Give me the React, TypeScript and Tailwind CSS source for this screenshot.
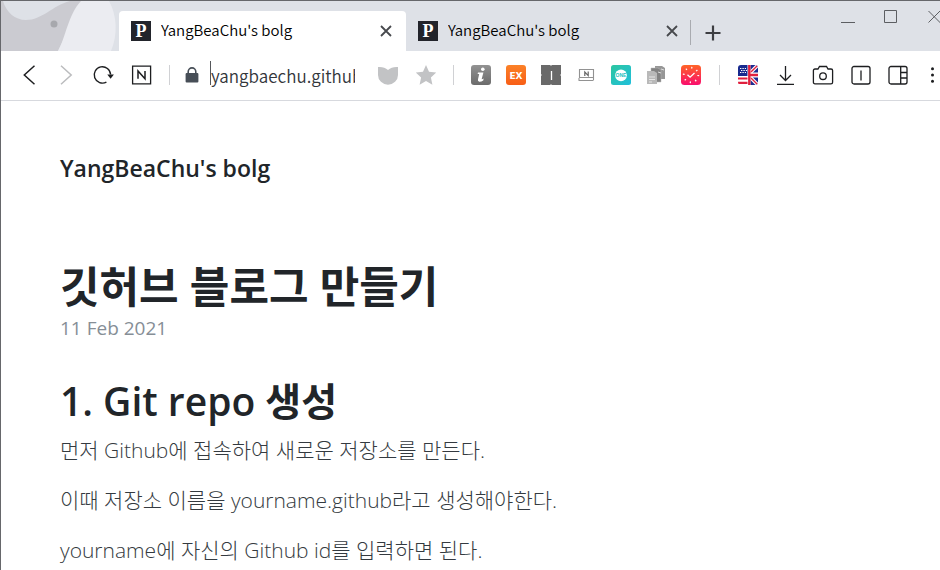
import type { ReactNode } from "react";

const uiFont = "font-['Noto_Sans_CJK_KR','Noto_Sans',sans-serif]";
const pageFont = "font-['Open_Sans','Noto_Sans_CJK_KR',sans-serif]";

function Favicon() {
  return (
    <span className="flex size-5 shrink-0 items-center justify-center bg-[#22242b] font-['Liberation_Serif',serif] text-lg leading-5 font-bold text-white">
      P
    </span>
  );
}

function Cross() {
  return (
    <svg viewBox="0 0 12 12" className="size-3" fill="none" stroke="#47494d" strokeWidth="1.8">
      <path d="M1 1l10 10M11 1L1 11" />
    </svg>
  );
}

function Tab({ active = false }: { active?: boolean }) {
  return (
    <div
      className={
        active
          ? "flex h-10 w-[287px] shrink-0 items-center rounded-t bg-white pl-3 pr-3.5"
          : "flex h-10 w-[284px] shrink-0 items-center pl-3 pr-3"
      }
    >
      <Favicon />
      <span className="ml-2.5 flex-1 truncate pb-0.5 text-[15px] leading-6 font-[350] text-black">YangBeaChu's bolg</span>
      <button aria-label="Close tab">
        <Cross />
      </button>
    </div>
  );
}

function Tool({ label, wide = false, children }: { label: string; wide?: boolean; children: ReactNode }) {
  return (
    <button
      aria-label={label}
      className={
        wide ? "flex h-5 w-[22px] shrink-0 items-center justify-center" : "flex size-5 shrink-0 items-center justify-center"
      }
    >
      {children}
    </button>
  );
}

function Divider() {
  return <span className="h-5 w-px shrink-0 bg-[#d0d1d4]" />;
}

function TabStrip() {
  return (
    <header className="flex h-[50px] overflow-hidden bg-[#dee1e7]">
      <svg viewBox="0 0 118 50" className="h-[50px] w-[118px] shrink-0">
        <path d="M0 0h118v50H0z" fill="#dee1e7" />
        <path d="M0 0h81L57 50H0z" fill="#cbcbd1" />
        <path d="M2 0C5 11 14 19 25 19C41 19 51 5 69 0z" fill="#dee1e7" />
        <path d="M80 0C67 14 65 36 57 50H110C117 34 116 14 108 0z" fill="#ebecf1" />
        <circle cx="53" cy="23" r="3.5" fill="#a7a8ad" />
      </svg>
      <div className="flex flex-1 items-end">
        <Tab active />
        <Tab />
        <span className="mb-1.5 h-[25px] w-px bg-[#a9abb0]" />
        <button aria-label="New tab" className="mb-2.5 ml-3.5">
          <svg viewBox="0 0 16 16" className="size-4" stroke="#3d3e42" strokeWidth="2.2">
            <path d="M8 0.5v15M0.5 8h15" />
          </svg>
        </button>
      </div>
      <div className="flex items-start gap-[29px] pt-2">
        <button aria-label="Minimize">
          <svg viewBox="0 0 14 14" className="size-3.5" stroke="#5c5e62">
            <path d="M0 13.5h14" />
          </svg>
        </button>
        <button aria-label="Maximize">
          <svg viewBox="0 0 14 14" className="size-3.5" fill="none" stroke="#5c5e62">
            <path d="M0.5 1.5h12v12h-12z" />
          </svg>
        </button>
        <button aria-label="Close window" className="w-[13px]">
          <svg viewBox="0 0 13 14" className="h-3.5 w-[13px]" stroke="#5c5e62">
            <path d="M1.5 2l12 12M13 2L1.5 13.5" />
          </svg>
        </button>
      </div>
    </header>
  );
}

function Extensions() {
  return (
    <div className="flex gap-[15px]">
      <Tool label="Info">
        <svg viewBox="0 0 20 20" className="size-5">
          <defs>
            <linearGradient id="info" x1="0" y1="0" x2="0" y2="1">
              <stop offset="0" stopColor="#929292" />
              <stop offset="1" stopColor="#6b6b6b" />
            </linearGradient>
          </defs>
          <rect width="20" height="20" rx="3" fill="url(#info)" />
          <circle cx="11.8" cy="4.3" r="1.8" fill="#fff" />
          <path d="M7 7.4h5.4L10.7 14q0 .7 2-.4l-.5 1.8q-2 1.5-4 1.3-1.8-.4-1.2-2.4L8.2 9H6.6z" fill="#fff" />
        </svg>
      </Tool>
      <Tool label="EX">
        <svg viewBox="0 0 20 20" className="size-5">
          <defs>
            <linearGradient id="ex" x1="0" y1="0" x2="0" y2="1">
              <stop offset="0" stopColor="#fb8128" />
              <stop offset="1" stopColor="#f85e16" />
            </linearGradient>
          </defs>
          <rect width="20" height="20" rx="3" fill="url(#ex)" />
          <text x="10" y="13.5" textAnchor="middle" fontFamily="DejaVu Sans" fontWeight="700" fontSize="9" fill="#fff">
            EX
          </text>
        </svg>
      </Tool>
      <Tool label="Text cursor">
        <svg viewBox="0 0 20 20" className="size-5">
          <path d="M0 0h20v20H0z" fill="#696969" />
          <path d="M10 0v1M10 19v1M0 10h1M19 10h1" stroke="#ddd" />
          <path d="M10.5 6v9" stroke="#fff" strokeWidth="1.3" />
        </svg>
      </Tool>
      <Tool label="Note">
        <svg viewBox="0 0 20 20" className="size-5" fill="none" stroke="#929292">
          <path d="M3.5 4.5h14v8h-14zM2.5 15.5h15M3 13v2M17.5 13v2" strokeWidth="1.1" />
          <path d="M8.8 11V7l3.4 3.6V6.6" stroke="#666" strokeWidth="1.2" />
        </svg>
      </Tool>
      <Tool label="ONE">
        <svg viewBox="0 0 20 20" className="size-5">
          <defs>
            <linearGradient id="one" x1="0" y1="0" x2="1" y2="1">
              <stop offset="0" stopColor="#2cc6a0" />
              <stop offset="1" stopColor="#20bfdc" />
            </linearGradient>
          </defs>
          <rect width="20" height="20" rx="2.5" fill="url(#one)" />
          <circle cx="10" cy="10.3" r="5.9" fill="#fff" />
          <text x="10" y="12.3" textAnchor="middle" fontFamily="Liberation Sans" fontWeight="700" fontSize="5" fill="#25c2be">
            ONE
          </text>
        </svg>
      </Tool>
      <Tool label="Copies">
        <svg viewBox="0 0 20 20" className="size-5">
          <path d="M9 1h7l3 2v11H9z" fill="#979797" />
          <path d="M5 3h7l3 2v12H5z" fill="#838383" stroke="#bbb" strokeWidth=".5" />
          <path d="M1 6h7l3 2v11H1z" fill="#b9b9b9" />
          <path d="M3 12h6M3 14.5h6M3 17h3" stroke="#e6e6e6" />
          <path d="M12 7l3 1M15 4l3 1" stroke="#ddd" />
        </svg>
      </Tool>
      <Tool label="Clock">
        <svg viewBox="0 0 20 20" className="size-5">
          <defs>
            <linearGradient id="clock" x1="0" y1="0" x2="0" y2="1">
              <stop offset="0" stopColor="#ff6427" />
              <stop offset="1" stopColor="#f90d6d" />
            </linearGradient>
          </defs>
          <rect width="20" height="20" rx="3.5" fill="url(#clock)" />
          <circle cx="10" cy="10" r="7.3" fill="none" stroke="#fff" strokeWidth="1.8" strokeDasharray="1.2 4.53" />
          <path d="M6.5 9.7l2.6 2.5L13.5 8" fill="none" stroke="#fff" strokeWidth="1.3" />
        </svg>
      </Tool>
    </div>
  );
}

function BrowserTools() {
  return (
    <div className="flex gap-[17px] text-[#1d1e20]">
      <Tool label="Translate">
        <svg viewBox="0 0 20 20" className="size-5">
          <defs>
            <clipPath id="flag">
              <rect width="20" height="20" rx="3" />
            </clipPath>
          </defs>
          <g clipPath="url(#flag)">
            <path d="M0 0h20v20H0z" fill="#fff" />
            <path d="M0 13.5h10M0 17.8h10" stroke="#e0203e" strokeWidth="2.2" />
            <path d="M0 0h10v11H0z" fill="#182a8e" />
            <path d="M2 3.5h6M3 5.5h6M2 7.5h6" stroke="#fff" strokeDasharray="1.4 1" />
            <path d="M11 0h9v20h-9z" fill="#1c2b91" />
            <path d="M20 0L11 9M20 20l-9-9" stroke="#fff" strokeWidth="3.6" />
            <path d="M20 0l-8 8M20 20l-8-8" stroke="#e0203e" strokeWidth="1.4" />
            <path d="M11 10h9" stroke="#fff" strokeWidth="5" />
            <path d="M11 0v20" stroke="#fff" strokeWidth="3" />
            <path d="M11 10h9M11.3 0v20" stroke="#e0203e" strokeWidth="2.4" />
          </g>
        </svg>
      </Tool>
      <Tool label="Downloads">
        <svg viewBox="0 0 20 20" className="size-5" fill="none" stroke="currentColor" strokeWidth="1.3">
          <path d="M10.5 1v14.5M5 10l5.5 5.5L16 10M2 19.3h17" />
        </svg>
      </Tool>
      <Tool label="Capture" wide>
        <svg viewBox="0 0 22 20" className="h-5 w-[22px]" fill="none" stroke="currentColor" strokeWidth="1.3">
          <path d="M3 4h3l1.5-2.5h7L16 4h3q1.6 0 1.6 1.6v11.6q0 1.6-1.6 1.6H3q-1.6 0-1.6-1.6V5.6Q1.4 4 3 4z" />
          <circle cx="11" cy="11.2" r="3.3" />
        </svg>
      </Tool>
      <Tool label="Memo">
        <svg viewBox="0 0 20 20" className="size-5" fill="none" stroke="currentColor" strokeWidth="1.3">
          <rect x="1" y="1.5" width="18" height="17.5" rx="2" />
          <path d="M10 5.5v10" />
        </svg>
      </Tool>
      <Tool label="Side panel">
        <svg viewBox="0 0 20 20" className="size-5" fill="none" stroke="currentColor" strokeWidth="1.3">
          <rect x="1" y="1.5" width="18" height="17.5" rx="2" />
          <path d="M12.7 1.5V19M12.7 7.5H19M12.7 13H19" />
        </svg>
      </Tool>
      <button aria-label="Menu" className="w-[15px] shrink-0">
        <svg viewBox="0 0 15 20" className="h-5 w-[15px]" fill="currentColor">
          <circle cx="7.5" cy="3.8" r="1.5" />
          <circle cx="7.5" cy="10" r="1.5" />
          <circle cx="7.5" cy="16.2" r="1.5" />
        </svg>
      </button>
    </div>
  );
}

function Toolbar() {
  return (
    <nav className="flex h-[50px] items-center overflow-hidden border-b border-[#d7d9de] bg-white pb-px">
      <div className="flex gap-[17px] pl-[18px]">
        <Tool label="Back">
          <svg viewBox="0 0 20 20" className="size-5" fill="none" stroke="#1d1e20" strokeWidth="1.5">
            <path d="M15.5 0.8L5.3 10l10.2 9.2" />
          </svg>
        </Tool>
        <Tool label="Forward">
          <svg viewBox="0 0 20 20" className="size-5" fill="none" stroke="#bbbcbe" strokeWidth="1.5">
            <path d="M5 0.8L15.2 10 5 19.2" />
          </svg>
        </Tool>
        <Tool label="Reload">
          <svg viewBox="0 0 20 20" className="size-5 overflow-visible" fill="none" stroke="#1d1e20" strokeWidth="1.4">
            <path d="M13.4 17.1A8.2 8.2 0 1 1 17.6 9.5" />
            <path d="M14.3 9.4h6.6L17.6 13.8z" fill="#1d1e20" stroke="none" />
          </svg>
        </Tool>
        <Tool label="Naver" wide>
          <svg viewBox="0 0 22 20" className="h-5 w-[22px]" fill="none" stroke="#1d1e20" strokeWidth="1.3">
            <path d="M2.6 1.1h18v17.8h-18z" />
            <path d="M8 13.7V6l7 7.7V6" strokeWidth="1.5" />
          </svg>
        </Tool>
      </div>
      <form className="ml-[17px] flex flex-1 items-center" onSubmit={(event) => event.preventDefault()}>
        <Divider />
        <svg viewBox="0 0 14 16" className="ml-[15px] h-4 w-3.5 shrink-0">
          <path d="M3.2 7V4.7a3.8 3.8 0 0 1 7.6 0V7" fill="none" stroke="#474e57" strokeWidth="1.6" />
          <rect x="0.6" y="6" width="12.8" height="9.4" rx="1" fill="#474e57" />
        </svg>
        <span className="ml-[11px] h-6 w-px shrink-0 self-start bg-[#55575b]" />
        <input
          aria-label="Address"
          defaultValue="yangbaechu.github.io"
          className="h-7 w-0 min-w-0 flex-1 p-0 text-[17px] font-[350] text-[#33363b] outline-none"
        />
      </form>
      <div className="mr-[17px] ml-[23px] flex gap-[18px]">
        <Tool label="Shield">
          <svg viewBox="0 0 20 20" className="size-5" fill="#c2c3c5">
            <path d="M0 2Q6 1.4 10 5Q14 1.4 20 2V10A10 9.7 0 0 1 0 10z" />
          </svg>
        </Tool>
        <Tool label="Bookmark">
          <svg viewBox="0 0 20 20" className="size-5" fill="#c2c3c5">
            <path d="M10 0l3 6.8 7.3.8-5.4 4.9 1.5 7.2L10 16l-6.4 3.7 1.5-7.2L-.3 7.6 7 6.8z" />
          </svg>
        </Tool>
      </div>
      <Divider />
      <div className="mr-[18px] ml-[17px]">
        <Extensions />
      </div>
      <Divider />
      <div className="ml-[18px]">
        <BrowserTools />
      </div>
    </nav>
  );
}

const paragraphs = [
  "먼저 Github에 접속하여 새로운 저장소를 만든다.",
  "이때 저장소 이름을 yourname.github라고 생성해야한다.",
  "yourname에 자신의 Github id를 입력하면 된다.",
];

export default function App() {
  return (
    <div className={`min-h-screen border-t border-l border-[#66676b] bg-white ${uiFont}`}>
      <TabStrip />
      <Toolbar />
      <main className={`px-[59px] pt-[47px] ${pageFont} text-[#212529]`}>
        <a href="#" className="block text-[23px] leading-10 font-semibold">
          YangBeaChu's bolg
        </a>
        <article className="pt-[73px]">
          <h1 className="text-[43px] leading-[52px] font-bold">깃허브 블로그 만들기</h1>
          <time dateTime="2021-02-11" className="block text-[19px] leading-[30px] text-[#868e96]">
            11 Feb 2021
          </time>
          <h2 className="mt-[31px] mb-[7px] text-[39px] leading-[54px] font-semibold">1. Git repo 생성</h2>
          {paragraphs.map((paragraph) => (
            <p key={paragraph} className="mb-5 text-[21px] leading-[30px] font-light text-[#343a40]">
              {paragraph}
            </p>
          ))}
        </article>
      </main>
    </div>
  );
}
